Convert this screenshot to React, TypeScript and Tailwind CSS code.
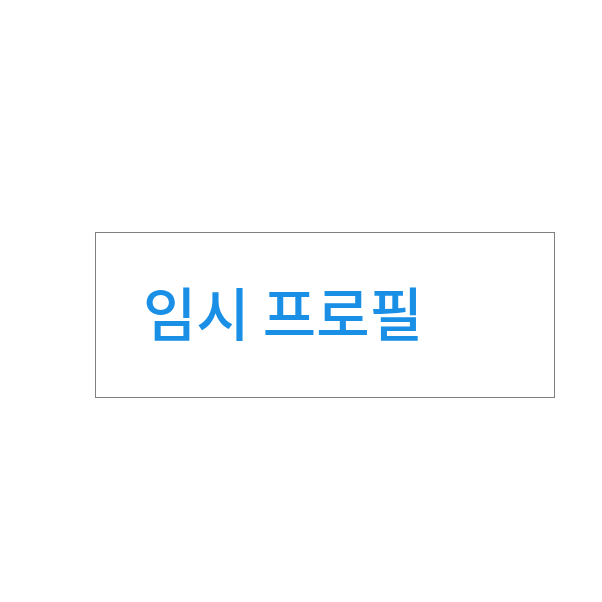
export default function App() {
  return (
    <div className="w-[602px] h-[602px] bg-white pt-[232px] pl-[95px]">
      <div className="w-[460px] h-[166px] border border-[#808080] flex items-center pl-[47px] pb-[9px]">
        <span
          className="text-[58px] leading-none font-medium text-[#1a8fe6]"
          style={{ fontFamily: '"Noto Sans CJK KR", "Noto Sans", sans-serif' }}
        >
          임시 프로필
        </span>
      </div>
    </div>
  );
}
